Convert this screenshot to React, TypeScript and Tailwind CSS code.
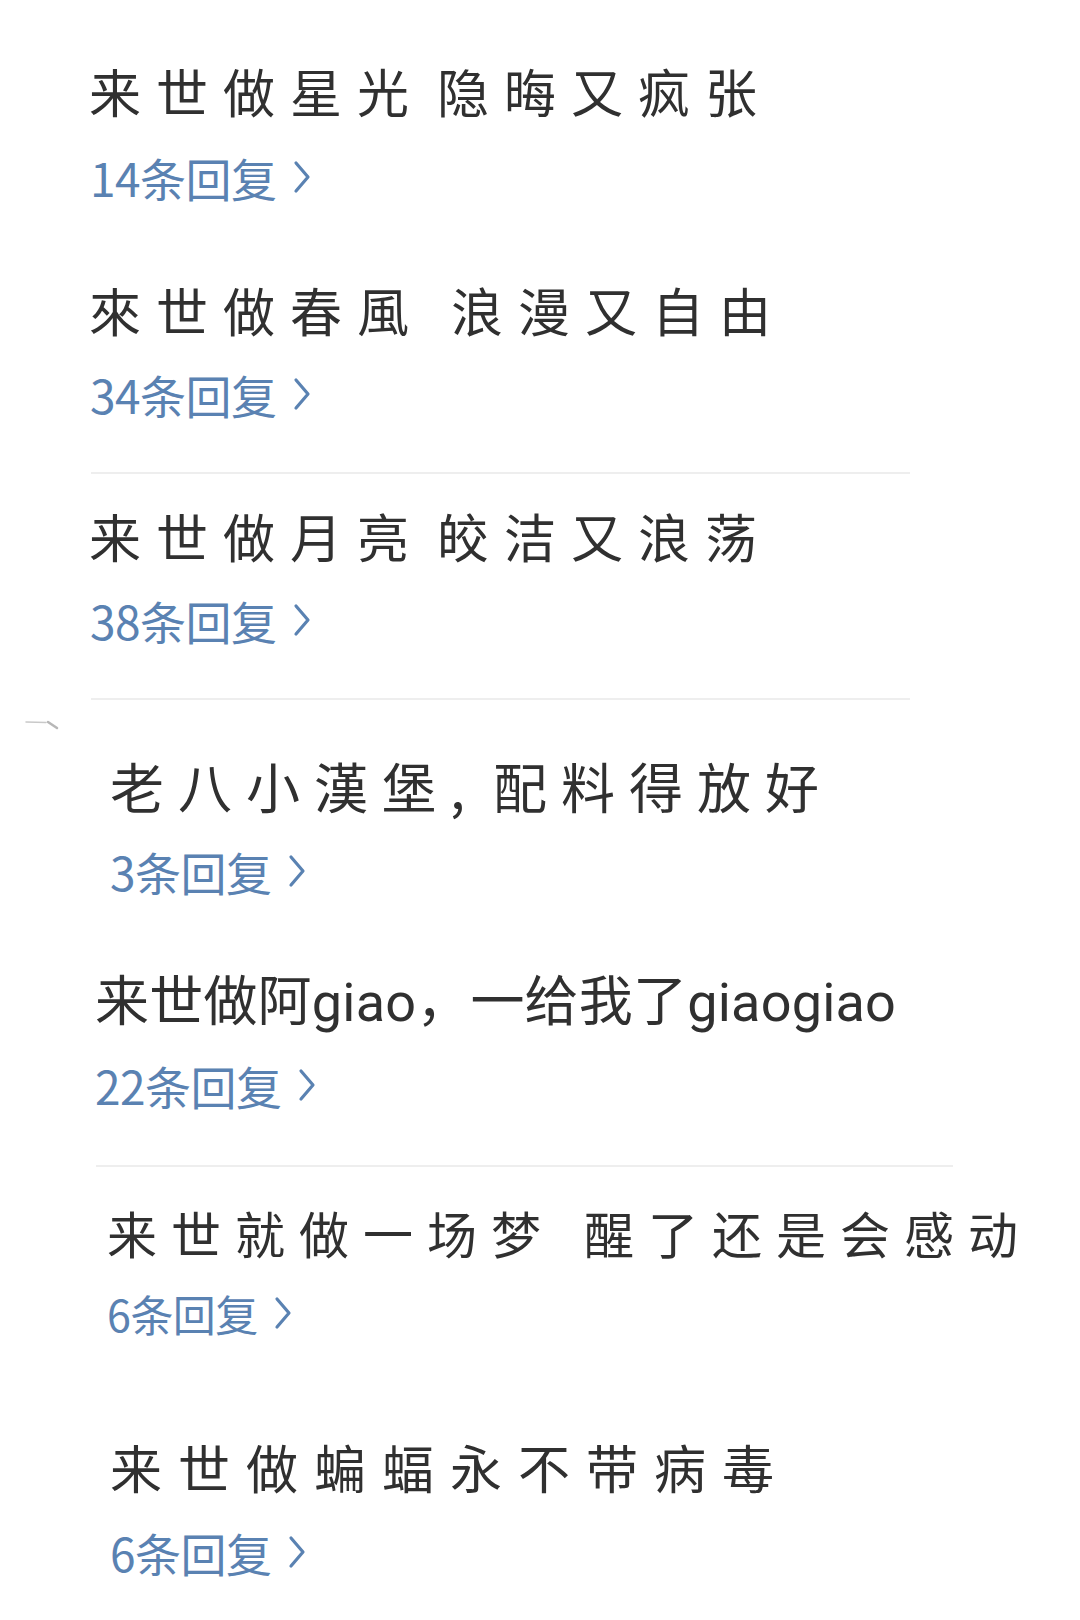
import type { ReactNode } from "react";

const Reply = ({ count, className }: { count: string; className: string }) => (
  <div className={`flex items-center h-[50px] leading-[50px] text-[#5a82b2] ${className}`}>
    <span className="whitespace-nowrap tracking-[-0.5px]">{count}条回复</span>
    <svg width="20" height="38" viewBox="0 0 20 38" fill="none" className="ml-[15px] shrink-0">
      <path d="M4 5 L16 19 L4 33" stroke="#5a82b2" strokeWidth="3.2" strokeLinecap="round" strokeLinejoin="round" />
    </svg>
  </div>
);

const Line = ({ children, className }: { children: ReactNode; className: string }) => (
  <p className={`h-[60px] leading-[60px] whitespace-nowrap text-[#303030] ${className}`}>{children}</p>
);

const Divider = ({ className }: { className: string }) => <div className={`h-[2px] bg-[#eeeeee] ${className}`} />;

export default function App() {
  return (
    <div
      className="relative w-[1080px] min-h-[1620px] bg-white overflow-hidden"
      style={{ fontFamily: '"Noto Sans CJK SC", "Noto Sans", sans-serif' }}
    >
      {/* small scratch mark left of the 4th comment */}
      <svg width="40" height="12" viewBox="0 0 40 12" className="absolute left-[24px] top-[719px]">
        <path d="M2 3 L22 3.5" stroke="#c9c9c9" strokeWidth="1.5" strokeLinecap="round" />
        <path d="M24 3 L33 9" stroke="#9a9a9a" strokeWidth="2.5" strokeLinecap="round" opacity="0.7" />
      </svg>

      <div className="flex flex-col items-start">
        <Line className="mt-[61px] ml-[89px] text-[52px] tracking-[15px]">
          来世做星光<span className="inline-block w-[13px]" />隐晦又疯张
        </Line>
        <Reply count="14" className="mt-[31px] ml-[90px] text-[46px]" />

        <Line className="mt-[78px] ml-[89px] text-[52px] tracking-[15px]">
          來世做春風<span className="inline-block w-[27px]" />浪漫又自由
        </Line>
        <Reply count="34" className="mt-[29px] ml-[90px] text-[46px]" />

        <Divider className="mt-[53px] ml-[91px] w-[819px]" />

        <Line className="mt-[32px] ml-[89px] text-[52px] tracking-[15px]">
          来世做月亮<span className="inline-block w-[13px]" />皎洁又浪荡
        </Line>
        <Reply count="38" className="mt-[29px] ml-[90px] text-[46px]" />

        <Divider className="mt-[53px] ml-[91px] w-[819px]" />

        <Line className="mt-[56px] ml-[110px] text-[54px] tracking-[14px]">
          老八小漢堡,<span className="inline-block w-[14px]" />配料得放好
        </Line>
        <Reply count="3" className="mt-[30px] ml-[110px] text-[46px]" />

        <Line className="mt-[77px] ml-[95px] text-[54px] tracking-[0.2px] font-['Roboto','Noto_Sans_CJK_SC',sans-serif]">
          来世做阿giao，一给我了giaogiao
        </Line>
        <Reply count="22" className="mt-[27px] ml-[95px] text-[46px]" />

        <Divider className="mt-[55px] ml-[96px] w-[857px]" />

        <Line className="mt-[35px] ml-[107px] text-[50px] tracking-[14px]">
          来世就做一场梦<span className="inline-block w-[29px]" />醒了还是会感动
        </Line>
        <Reply count="6" className="mt-[26px] ml-[107px] text-[43px]" />

        <Line className="mt-[99px] ml-[110px] text-[52px] tracking-[16px]">来世做蝙蝠永不带病毒</Line>
        <Reply count="6" className="mt-[30px] ml-[110px] text-[46px]" />
      </div>
    </div>
  );
}
